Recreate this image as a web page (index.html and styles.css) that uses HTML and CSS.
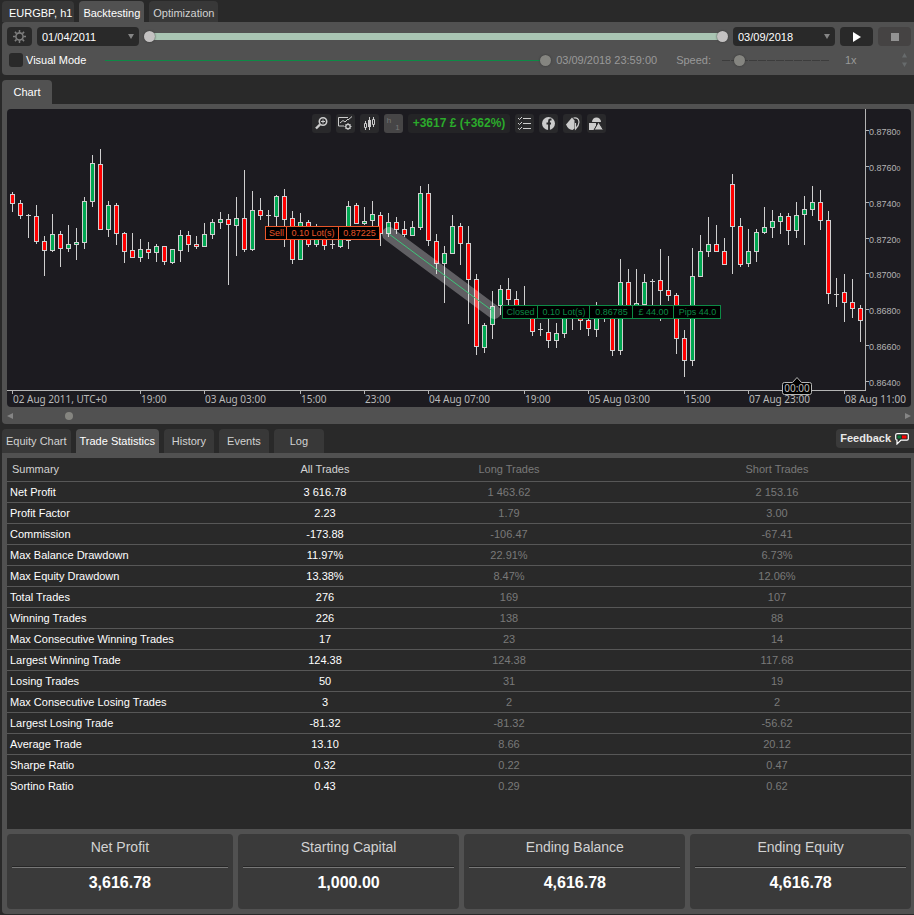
FILE: index.html
```html
<!DOCTYPE html>
<html lang="en">
<head>
  <meta charset="UTF-8">
  <meta name="viewport" content="width=device-width, initial-scale=1.0">
  <title>EURGBP, h1 - Backtesting</title>
  <link rel="stylesheet" href="styles.css">
</head>
<body>
  <nav class="tabs top-tabs">
    <button class="tab symbol">EURGBP, h1</button>
    <button class="tab active">Backtesting</button>
    <button class="tab">Optimization</button>
  </nav>

  <section class="panel settings">
    <div class="settings-row">
      <button class="dark-btn gear-btn" aria-label="Settings">
        <svg width="13" height="13" viewBox="0 0 13 13">
          <circle cx="6.5" cy="6.5" r="3.6" fill="none" stroke="#7d7d7d" stroke-width="1.6"/>
          <path d="M6.5 0v2.4M6.5 10.6V13M0 6.5h2.4M10.6 6.5H13M1.9 1.9l1.7 1.7M9.4 9.4l1.7 1.7M11.1 1.9L9.4 3.6M3.6 9.4l-1.7 1.7" stroke="#7d7d7d" stroke-width="1.5"/>
        </svg>
      </button>
      <span class="date-box">
        <select aria-label="Start date"><option>01/04/2011</option></select>
      </span>
      <div class="period">
        <input type="range" class="range" min="0" max="100" value="0" aria-label="Period start">
        <input type="range" class="range" min="0" max="100" value="100" aria-label="Period end">
      </div>
      <span class="date-box">
        <select aria-label="End date"><option>03/09/2018</option></select>
      </span>
      <button class="dark-btn play-btn" aria-label="Play">
        <svg width="8" height="10" viewBox="0 0 8 10"><path d="M0 0l8 5-8 5z" fill="#fff"/></svg>
      </button>
      <button class="dark-btn stop-btn" aria-label="Stop" disabled>
        <svg width="8" height="8" viewBox="0 0 8 8"><path d="M0 0h8v8H0z" fill="#929292"/></svg>
      </button>
    </div>
    <div class="settings-row second">
      <label class="visual"><input type="checkbox"> Visual Mode</label>
      <input type="range" class="range progress" min="0" max="100" value="100" aria-label="Progress">
      <span class="muted stamp">03/09/2018 23:59:00</span>
      <label class="muted speed-label" for="speed">Speed:</label>
      <input type="range" class="range speed" id="speed" min="0" max="100" value="12">
      <input type="text" class="muted speed-value" value="1x" aria-label="Speed value">
      <svg class="spin" width="5" height="14" viewBox="0 0 5 14"><path d="M0 4.500L2.500 0 5 4.500zM0 9.500h5L2.500 14z" fill="#676b6c"/></svg>
    </div>
  </section>

  <nav class="tabs chart-tabs">
    <button class="tab active">Chart</button>
  </nav>

  <section class="panel chart-panel">
    <div class="chart-area">
      <svg class="chart" id="chart" viewBox="7 109 904 298">
        <g id="candles" shape-rendering="crispEdges"></g>
        <g>
          <path d="M389 234L494 312" stroke="#fff" stroke-opacity="0.3" stroke-width="14" stroke-linecap="round"/>
          <path d="M389 234L494 312" stroke="#3fc47a"/>
        </g>
        <g id="axes" shape-rendering="crispEdges"></g>
        <g id="tags"></g>
        <g class="time-tag">
          <path d="M784.500 382.500h8l4.500-5 4.500 5h8q2 0 2 2v8q0 2-2 2h-25q-2 0-2-2v-8q0-2 2-2z" fill="#000" stroke="#b8b8b8"/>
          <text x="797" y="392" text-anchor="middle" class="time-label">00:00</text>
        </g>
      </svg>
      <div class="toolbar">
        <button class="tool" aria-label="Zoom">
          <svg viewBox="0 0 19 19"><circle cx="11" cy="7.500" r="3.700" fill="none" stroke="#ccc" stroke-width="1.600"/><path d="M9 7.500h4M11 5.500v4" stroke="#ccc"/><path d="M8 10.500l-4 4" stroke="#ccc" stroke-width="2.400"/></svg>
        </button>
        <button class="tool" aria-label="Chart settings">
          <svg viewBox="0 0 19 19" fill="none" stroke="#ccc"><path d="M12 3.500H2.500v8.500H8M4 9l3-2.500 2 1.500 3-3M12 6l4-3.500"/><circle cx="12" cy="12.500" r="2.200" stroke-width="1.300"/><path d="M12 9v1.300M12 14.700V16M8.500 12.500h1.300M14.200 12.500h1.300M9.500 10l1 1M13.500 14l1 1M14.500 10l-1 1M10.500 14l-1 1"/></svg>
        </button>
        <button class="tool" aria-label="Chart type">
          <svg viewBox="0 0 19 19"><path d="M5.500 7v9M9.500 3v13M13.500 3v10" stroke="#ccc"/><path d="M4.500 9.500h2v4h-2zM12.500 5.500h2v5h-2z" fill="#29292b" stroke="#ccc"/><path d="M8 6h3v7H8z" fill="#ccc"/></svg>
        </button>
        <button class="tool timeframe" aria-label="Timeframe"><span>h</span><sub>1</sub></button>
        <span class="profit">+3617 £ (+362%)</span>
        <button class="tool" aria-label="Trades list">
          <svg viewBox="0 0 19 19" fill="none" stroke="#ccc"><path d="M8 4.500h8M8 9.500h8M8 14.500h8M3 4l1.500 1.500L7 3M3 9l1.500 1.500L7 8M3 14l1.500 1.500L7 13"/></svg>
        </button>
        <button class="tool" aria-label="Share">
          <svg viewBox="0 0 19 19"><circle cx="9.500" cy="9.500" r="6.500" fill="#ccc"/><path d="M12.500 5.500h-1Q10 5.500 10 7v9M7.500 9.500h4.500" fill="none" stroke="#29292b" stroke-width="1.800"/></svg>
        </button>
        <button class="tool" aria-label="Colours">
          <svg viewBox="0 0 19 19"><path d="M3 10.500L9 3.500l2.500 3v8l-2 1.500Q5 15.500 3 10.500z" fill="#ccc"/><path d="M10.500 4q5-1 5.500 4 0 3.500-3.500 7V9" fill="none" stroke="#ccc" stroke-width="1.200"/></svg>
        </button>
        <button class="tool" aria-label="Objects">
          <svg viewBox="0 0 19 19"><path d="M5 8a4.500 4.500 0 0 1 9 0z" fill="#ccc"/><path d="M2 9h7v3l-2 4H2z" fill="#ccc"/><path d="M11.500 8l5 8H7z" fill="#ccc" stroke="#29292b"/></svg>
        </button>
      </div>
    </div>
    <div class="scroll">
      <button class="arrow" aria-label="Scroll left"><svg width="6" height="6" viewBox="0 0 6 6"><path d="M6 0v6L0 3z" fill="#858585"/></svg></button>
      <input type="range" class="range scroll-range" min="0" max="1000" value="59" aria-label="Scroll chart">
      <button class="arrow" aria-label="Scroll right"><svg width="6" height="6" viewBox="0 0 6 6"><path d="M0 0v6l6-3z" fill="#858585"/></svg></button>
    </div>
  </section>

  <nav class="tabs stats-tabs">
    <button class="tab">Equity Chart</button>
    <button class="tab active">Trade Statistics</button>
    <button class="tab short">History</button>
    <button class="tab short">Events</button>
    <button class="tab short">Log</button>
    <a href="#" class="feedback">Feedback
      <svg width="14" height="12" viewBox="0 0 14 12"><path d="M2.500.7h9.500q1.300 0 1.300 1.300v3.800q0 1.300-1.300 1.300H6L2 11V7.100Q.7 7 .7 5.800V2Q.7.700 2.500.700z" fill="#2a2a2a" stroke="#fff" stroke-width="1.200"/><path d="M2.500 2.500h3.500v3H2.500z" fill="#0a7a3a"/><path d="M7 2.500h4.500v3H7z" fill="#f00"/></svg>
    </a>
  </nav>

  <section class="panel stats">
    <div class="table-wrap">
      <table>
        <colgroup><col class="col-label"><col class="col-all"><col><col></colgroup>
        <thead>
          <tr><th>Summary</th><th>All Trades</th><th>Long Trades</th><th>Short Trades</th></tr>
        </thead>
        <tbody>
          <tr><td>Net Profit</td><td>3 616.78</td><td>1 463.62</td><td>2 153.16</td></tr>
          <tr><td>Profit Factor</td><td>2.23</td><td>1.79</td><td>3.00</td></tr>
          <tr><td>Commission</td><td>-173.88</td><td>-106.47</td><td>-67.41</td></tr>
          <tr><td>Max Balance Drawdown</td><td>11.97%</td><td>22.91%</td><td>6.73%</td></tr>
          <tr><td>Max Equity Drawdown</td><td>13.38%</td><td>8.47%</td><td>12.06%</td></tr>
          <tr><td>Total Trades</td><td>276</td><td>169</td><td>107</td></tr>
          <tr><td>Winning Trades</td><td>226</td><td>138</td><td>88</td></tr>
          <tr><td>Max Consecutive Winning Trades</td><td>17</td><td>23</td><td>14</td></tr>
          <tr><td>Largest Winning Trade</td><td>124.38</td><td>124.38</td><td>117.68</td></tr>
          <tr><td>Losing Trades</td><td>50</td><td>31</td><td>19</td></tr>
          <tr><td>Max Consecutive Losing Trades</td><td>3</td><td>2</td><td>2</td></tr>
          <tr><td>Largest Losing Trade</td><td>-81.32</td><td>-81.32</td><td>-56.62</td></tr>
          <tr><td>Average Trade</td><td>13.10</td><td>8.66</td><td>20.12</td></tr>
          <tr><td>Sharpe Ratio</td><td>0.32</td><td>0.22</td><td>0.47</td></tr>
          <tr><td>Sortino Ratio</td><td>0.43</td><td>0.29</td><td>0.62</td></tr>
        </tbody>
      </table>
    </div>
    <div class="cards">
      <div class="card"><h2>Net Profit</h2><p>3,616.78</p></div>
      <div class="card"><h2>Starting Capital</h2><p>1,000.00</p></div>
      <div class="card"><h2>Ending Balance</h2><p>4,616.78</p></div>
      <div class="card"><h2>Ending Equity</h2><p>4,616.78</p></div>
    </div>
  </section>

  <script src="chart.js"></script>
</body>
</html>
```

FILE: styles.css
```css
:root {
  --bg: #292929;
  --panel: #515151;
  --tab-bg: #383838;
  --card-bg: #3a3a3a;
  --chart-bg: #1c1b20;
  --text: #d2d2d2;
  --line: #575757;
}
* {
  box-sizing: border-box;
}
body {
  font-family: "Liberation Sans", Arial, sans-serif;
  font-size: 11px;
  line-height: 13px;
  background-color: var(--bg);
  color: white;
  margin: 0;
  padding: 1px 0 1px 2px;
  display: flex;
  flex-direction: column;
  min-height: 100vh;
}
button, input, select {
  font: inherit;
  color: inherit;
  border: none;
  margin: 0;
  padding: 0;
}
button {
  cursor: pointer;
}
svg {
  display: block;
}

/* tabs */
.tabs {
  display: flex;
  gap: 5px;
}
.tab {
  background-color: var(--tab-bg);
  color: var(--text);
  border-radius: 4px 4px 0 0;
  padding: 0 4px;
  height: 24px;
}
.tab.active {
  background-color: var(--panel);
  color: white;
}
.top-tabs .tab {
  height: 21px;
  padding-top: 3px;
}
.tab.symbol {
  color: white;
  padding-left: 7px;
  padding-right: 2px;
}
.chart-tabs, .stats-tabs {
  margin-top: 5px;
}
.chart-tabs .tab, .tab.short {
  width: 50px;
}
.feedback {
  display: flex;
  align-items: center;
  gap: 4px;
  height: 19px;
  margin-left: auto;
  padding: 0 5px 0 4px;
  background-color: var(--card-bg);
  border-radius: 4px 0 0 4px;
  color: #e8e8e8;
  font-weight: bold;
  text-decoration: none;
}

/* settings */
.panel {
  background-color: var(--panel);
  border-radius: 0 0 0 4px;
}
.settings {
  border-radius: 4px 0 0 4px;
  padding: 5px 3px 8px 5px;
}
.settings-row {
  display: flex;
  align-items: center;
  gap: 5px;
}
.dark-btn {
  display: flex;
  align-items: center;
  justify-content: center;
  width: 33px;
  height: 19px;
  background-color: var(--bg);
  border-radius: 4px;
}
.gear-btn {
  width: 25px;
}
.stop-btn {
  background-color: #454343;
}
.date-box {
  position: relative;
  width: 102px;
}
.date-box select {
  display: block;
  width: 100%;
  height: 19px;
  padding: 1px 5px 0;
  appearance: none;
  background-color: var(--bg);
  color: white;
  border-radius: 4px;
}
.date-box::after {
  content: "";
  position: absolute;
  right: 5px;
  top: 7px;
  border: 3px solid transparent;
  border-top: 5px solid #858585;
  border-bottom: none;
  pointer-events: none;
}
.range {
  appearance: none;
  display: block;
  min-width: 0;
  height: 14px;
  background: transparent;
}
.range::-webkit-slider-thumb {
  appearance: none;
  width: 11px;
  height: 11px;
  border-radius: 50%;
  background-color: #858580;
  box-shadow: 0 0 2px #333;
  pointer-events: auto;
}
.period {
  display: grid;
  flex: 1;
  background: linear-gradient(#a9c5b3, #a9c5b3) center / calc(100% - 10px) 7px no-repeat;
}
.period .range {
  grid-area: 1 / 1;
  width: 100%;
  pointer-events: none;
}
.period .range::-webkit-slider-thumb {
  background-color: #c3c1c1;
}
.second {
  height: 14px;
  margin-top: 7px;
  padding-left: 2px;
}
.visual {
  display: flex;
  align-items: center;
  gap: 3px;
}
.visual input {
  appearance: none;
  width: 14px;
  height: 14px;
  background-color: var(--bg);
  border-radius: 3px;
}
.progress {
  flex: 1;
  margin-left: 14px;
  background: linear-gradient(#0c8a45, #0c8a45) center / 100% 1px no-repeat;
}
.muted {
  color: #999;
}
.speed-label {
  margin-left: 14px;
}
.speed {
  width: 108px;
  margin-left: 6px;
  background: repeating-linear-gradient(90deg, #3c3c3c 0 8px, #515151 8px 9px) center / 100% 1px no-repeat;
}
.speed-value {
  width: 42px;
  margin-left: 10px;
  background: transparent;
}
.spin {
  margin: 0 4px 0 10px;
}

/* chart */
.chart-panel {
  padding: 5px 3px 0 5px;
}
.chart-area {
  position: relative;
}
.chart {
  width: 100%;
  height: auto;
  background-color: var(--chart-bg);
  border-radius: 4px;
}
.time-label {
  font: 10px "Noto Sans", "Open Sans", sans-serif;
  fill: #b9b9b9;
}
.price-label {
  font-size: 9px;
  fill: #b4b4b4;
}
.price-label tspan {
  font-size: 7px;
}
.tag-label {
  font-size: 9px;
}
.toolbar {
  position: absolute;
  top: 5px;
  left: 0;
  right: 0;
  display: flex;
  justify-content: center;
  gap: 5px;
}
.tool {
  width: 19px;
  height: 19px;
  background-color: #29292b;
  border-radius: 3px;
}
.timeframe {
  display: flex;
  justify-content: space-between;
  padding: 0 3px;
  background-color: #464546;
  color: #777;
  font-size: 8px;
}
.timeframe sub {
  align-self: flex-end;
  font-size: 8px;
  line-height: 10px;
}
.profit {
  background-color: #242426;
  border-radius: 3px;
  padding: 0 5px;
  color: #2bab2b;
  font-size: 12px;
  font-weight: bold;
  line-height: 19px;
}
.scroll {
  display: flex;
  align-items: center;
  height: 17px;
}
.arrow {
  background: transparent;
}
.scroll-range {
  flex: 1;
}
.scroll-range::-webkit-slider-thumb {
  width: 8px;
  height: 8px;
  box-shadow: none;
}

/* statistics */
.stats {
  display: flex;
  flex: 1;
  flex-direction: column;
  gap: 5px;
  padding: 5px 3px 5px 5px;
}
.table-wrap {
  flex: 1;
  background-color: var(--bg);
}
table {
  width: 100%;
  table-layout: fixed;
  border-collapse: separate;
  border-spacing: 0;
}
.col-label {
  width: 268px;
}
.col-all {
  width: 100px;
}
th, td {
  height: 21px;
  padding: 0;
  border-bottom: 1px solid var(--line);
  color: #797979;
  font-weight: normal;
  text-align: center;
}
th {
  height: 24px;
}
td:first-child, th:first-child {
  padding-left: 3px;
  text-align: left;
}
th:first-child {
  padding-left: 5px;
}
th:nth-child(-n+2) {
  color: var(--text);
}
td:nth-child(-n+2) {
  color: white;
}
tr:last-child td {
  border-bottom: none;
}
thead tr:last-child th {
  border-bottom: 1px solid var(--line);
}
.cards {
  display: grid;
  grid-template-columns: 226fr 222fr 221fr 221fr;
  gap: 5px;
}
.card {
  height: 75px;
  padding: 5px;
  background-color: var(--card-bg);
  border-radius: 4px;
  text-align: center;
}
.card h2 {
  margin: 0;
  padding-bottom: 12px;
  border-bottom: 1px solid #777;
  box-shadow: inset 0 -1px #262626;
  color: var(--text);
  font-size: 14px;
  font-weight: normal;
  line-height: 16px;
}
.card p {
  margin: 5px 0 0;
  font-size: 16px;
  font-weight: bold;
  line-height: 20px;
}
```

FILE: chart.js
```js
// high, body top, body bottom, low, colour (r, g or d for doji)
const candles = [
  [192,194,204,212,'r'], [200,203,216,219,'r'], [214,215,216,238,'d'], [205,216,242,244,'r'],
  [236,241,251,276,'r'], [214,234,251,252,'g'], [231,234,249,267,'r'], [225,244,249,252,'g'],
  [228,242,245,260,'g'], [197,201,243,249,'g'], [155,163,202,207,'g'], [149,164,230,230,'r'],
  [201,205,230,237,'g'], [203,205,234,245,'r'], [232,233,252,263,'r'], [233,250,258,258,'r'],
  [239,249,258,262,'g'], [242,249,253,259,'r'], [244,246,253,262,'g'], [246,246,262,265,'r'],
  [249,249,263,264,'g'], [230,235,251,262,'g'], [231,235,245,252,'r'], [236,244,247,249,'r'],
  [223,234,247,247,'g'], [219,222,235,239,'g'], [212,219,223,229,'g'], [214,219,225,285,'r'],
  [197,218,226,256,'g'], [170,218,250,252,'r'], [191,210,250,251,'g'], [198,210,216,220,'r'],
  [210,215,216,240,'d'], [195,196,217,230,'g'], [189,196,220,247,'r'], [211,218,260,264,'r'],
  [213,222,260,260,'g'], [220,222,245,247,'r'], [224,230,245,247,'g'], [230,232,246,250,'r'],
  [236,244,245,249,'d'], [232,236,247,248,'g'], [201,206,241,249,'g'], [203,205,224,224,'r'],
  [207,221,224,225,'g'], [201,214,221,226,'g'], [212,215,234,246,'r'], [213,222,234,237,'g'],
  [217,222,230,234,'r'], [221,229,235,237,'r'], [221,227,236,236,'g'], [186,193,228,230,'g'],
  [184,193,241,246,'r'], [234,241,264,274,'r'], [246,253,264,303,'g'], [215,226,254,254,'g'],
  [223,226,244,265,'r'], [226,243,280,324,'r'], [274,279,347,355,'r'], [323,325,348,353,'g'],
  [291,306,325,339,'g'], [285,289,306,315,'g'], [278,289,300,306,'r'], [291,299,310,315,'r'],
  [286,306,312,316,'r'], [306,308,332,336,'r'], [323,329,330,336,'d'], [316,332,341,348,'r'],
  [323,333,341,348,'g'], [306,310,334,338,'g'], [310,312,316,330,'g'], [306,308,321,330,'r'],
  [310,320,329,336,'r'], [302,308,330,337,'g'], [306,308,312,322,'r'], [306,308,351,356,'r'],
  [259,282,351,355,'g'], [269,282,310,315,'r'], [269,303,308,316,'g'], [274,282,305,305,'g'],
  [279,281,282,310,'d'], [249,280,291,321,'r'], [256,290,296,301,'r'], [293,295,339,354,'r'],
  [330,338,361,377,'r'], [248,276,361,366,'g'], [235,251,277,277,'g'], [217,244,252,257,'g'],
  [225,244,252,252,'r'], [238,251,265,265,'r'], [174,184,227,274,'r'], [218,226,265,267,'r'],
  [229,251,264,267,'g'], [229,232,252,262,'g'], [207,227,233,234,'g'], [210,221,228,238,'g'],
  [213,216,222,234,'g'], [213,216,231,245,'r'], [202,215,231,238,'g'], [196,209,215,245,'g'],
  [186,202,210,216,'g'], [190,202,221,230,'r'], [211,220,294,304,'r'], [278,294,295,307,'d'],
  [274,292,303,322,'r'], [279,302,309,318,'r'], [305,308,321,342,'r']
];
const times = [
  [12, '02 Aug 2011, UTC+0'], [140, '19:00'], [204, '03 Aug 03:00'], [300, '15:00'],
  [364, '23:00'], [428, '04 Aug 07:00'], [524, '19:00'], [588, '05 Aug 03:00'],
  [684, '15:00'], [748, '07 Aug 23:00'], [844, '08 Aug 11:00']
];
const prices = [
  [130, '0.878'], [166, '0.876'], [202, '0.874'], [238, '0.872'],
  [273, '0.870'], [309, '0.868'], [345, '0.866'], [381, '0.864']
];
const tags = [
  { y: 226, color: '#e8562a', edges: [265, 286, 338, 379], texts: ['Sell', '0.10 Lot(s)', '0.87225'] },
  { y: 305, color: '#0c8a45', edges: [502, 537, 589, 632, 673, 720], texts: ['Closed', '0.10 Lot(s)', '0.86785', '£ 44.00', 'Pips 44.0'] }
];
const fills = { r: '#ff0000', g: '#00a651' };

function rect(x, y, w, h, fill) {
  return `<rect x="${x}" y="${y}" width="${w}" height="${h}" fill="${fill}"/>`;
}

function drawCandles() {
  let out = '';
  candles.forEach(([high, top, bottom, low, type], i) => {
    const x = 12 + i * 8;
    out += rect(x, high, 1, low - high, '#cfcfcf');
    out += rect(x - 2, top, 5, bottom - top, '#cfcfcf');
    if (type !== 'd') out += rect(x - 1, top + 1, 3, bottom - top - 2, fills[type]);
  });
  document.getElementById('candles').innerHTML = out;
}

function drawAxes() {
  let out = rect(7, 390, 859, 1, '#b4b4b4') + rect(865, 109, 1, 282, '#b4b4b4');
  times.forEach(([x, label]) => {
    out += rect(x, 391, 1, 3, '#b4b4b4');
    out += `<text class="time-label" x="${x + 1}" y="403">${label}</text>`;
  });
  prices.forEach(([y, label]) => {
    out += rect(866, y, 3, 1, '#b4b4b4');
    out += `<text class="price-label" x="869" y="${y + 5}">${label}0<tspan>0</tspan></text>`;
  });
  document.getElementById('axes').innerHTML = out;
}

function drawTags() {
  let out = '';
  tags.forEach(({ y, color, edges, texts }) => {
    texts.forEach((text, i) => {
      const x = edges[i];
      const w = edges[i + 1] - x;
      out += `<rect x="${x + 0.5}" y="${y + 0.5}" width="${w}" height="13" fill="#000" stroke="${color}"/>`;
      out += `<text class="tag-label" x="${x + w / 2 + 1}" y="${y + 10}" text-anchor="middle" fill="${color}">${text}</text>`;
    });
  });
  document.getElementById('tags').innerHTML = out;
}

drawCandles();
drawAxes();
drawTags();
```
